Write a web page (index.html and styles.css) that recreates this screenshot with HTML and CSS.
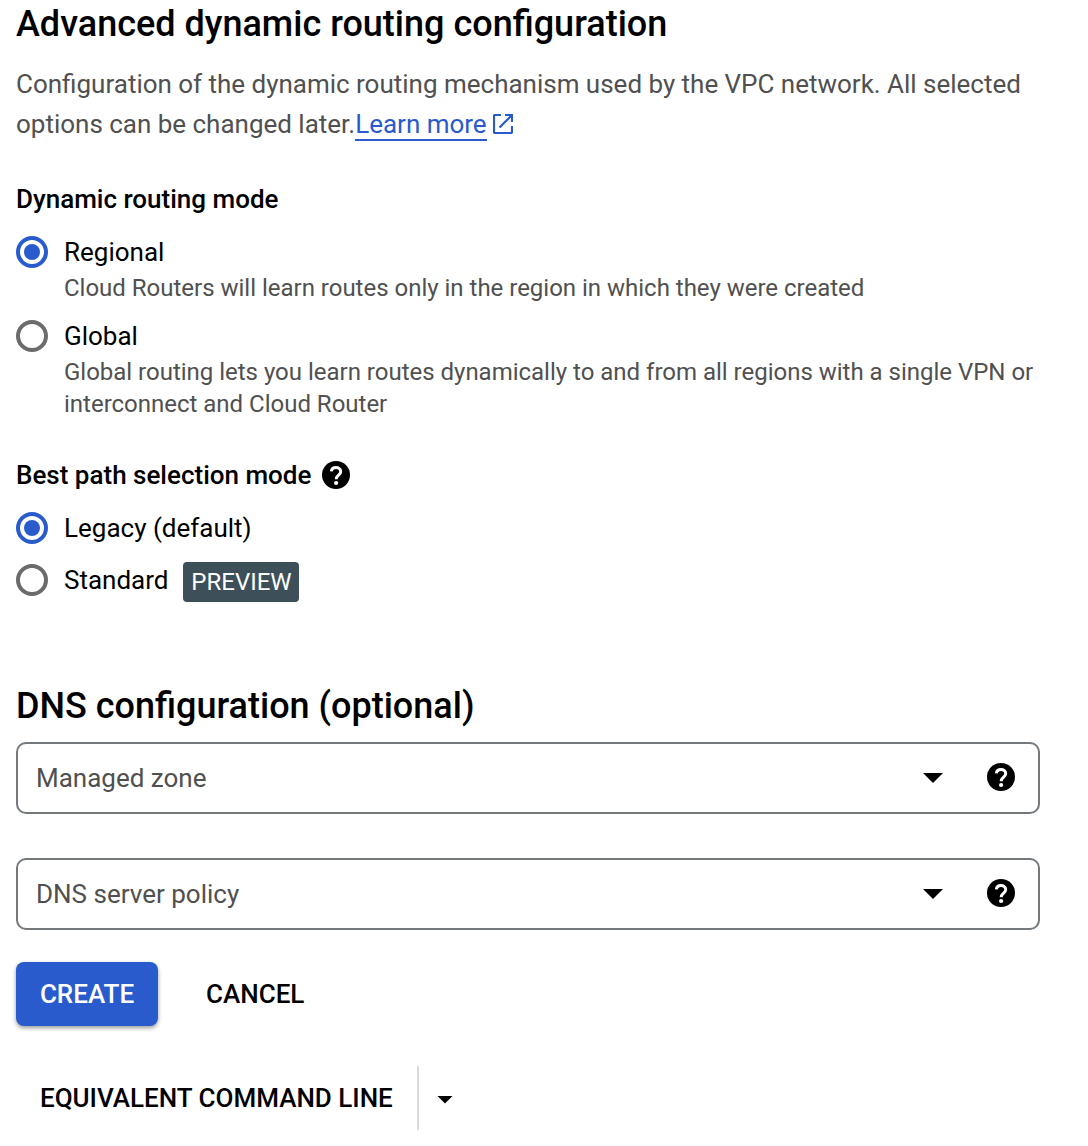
FILE: index.html
```html
<!DOCTYPE html>
<html lang="en">
<head>
<meta charset="utf-8">
<title>Advanced dynamic routing configuration</title>
<link rel="stylesheet" href="styles.css">
</head>
<body>
<svg class="defs" aria-hidden="true">
  <symbol id="help" viewBox="0 0 28 28"><circle cx="14" cy="14" r="14"/><path d="M9.300 10.400C9.600 7.800 11.500 6.500 14 6.500s4.700 1.600 4.700 4.200c0 3.200-4.500 3.700-4.500 7.500" fill="none" stroke="#fff" stroke-width="3"/><circle cx="14.100" cy="22" r="2.100" fill="#fff"/></symbol>
</svg>
<main class="page">
  <h1 class="title">Advanced dynamic routing configuration</h1>
  <p class="description">Configuration of the dynamic routing mechanism used by the VPC network. All selected<br>options can be changed later.<a class="link" href="#">Learn more</a><svg class="external" viewBox="0 0 20 20"><path d="M8 1H2Q1 1 1 2V18Q1 19 2 19H18Q19 19 19 18V12M12 1H19V8M19 1 6.500 13.500"/></svg></p>

  <h2 class="subtitle">Dynamic routing mode</h2>
  <div class="option option-regional">
    <span class="radio radio-on"></span>
    <div><div class="label">Regional</div><div class="hint">Cloud Routers will learn routes only in the region in which they were created</div></div>
  </div>
  <div class="option option-global">
    <span class="radio"></span>
    <div><div class="label">Global</div><div class="hint">Global routing lets you learn routes dynamically to and from all regions with a single VPN or<br>interconnect and Cloud Router</div></div>
  </div>

  <h2 class="subtitle subtitle-path">Best path selection mode <svg class="help"><use href="#help"/></svg></h2>
  <div class="option option-legacy"><span class="radio radio-on"></span><div class="label">Legacy (default)</div></div>
  <div class="option option-standard"><span class="radio"></span><div class="label">Standard</div><span class="badge">PREVIEW</span></div>

  <h1 class="title title-dns">DNS configuration (optional)</h1>
  <div class="select"><span class="placeholder">Managed zone</span><span class="caret"></span><svg class="help"><use href="#help"/></svg></div>
  <div class="select select-policy"><span class="placeholder">DNS server policy</span><span class="caret"></span><svg class="help"><use href="#help"/></svg></div>

  <div class="actions"><button class="button create">CREATE</button><button class="button cancel">CANCEL</button></div>
  <div class="command"><button class="button equivalent">EQUIVALENT COMMAND LINE</button><button class="button more" aria-label="More"><span class="caret caret-small"></span></button></div>
</main>
</body>
</html>
```
FILE: styles.css
```css
* { box-sizing: border-box; }
body { margin: 0; background: #fff; color: #000; font-family: Roboto, sans-serif; }
.defs { display: block; width: 0; height: 0; }
.page { width: 1088px; height: 1146px; padding: 0 48px 0 16px; overflow: hidden; }
.title { margin: 0; font-size: 36px; font-weight: 500; line-height: 48px; white-space: nowrap; }
.description { margin: 16px 0 0; color: #505050; font-size: 26px; line-height: 40px; word-spacing: -.08px; white-space: nowrap; }
.link { color: #2a5bcd; text-decoration: none; border-bottom: 2px solid #2a5bcd; }
.external { width: 20px; height: 20px; margin-left: 6px; vertical-align: -1px; fill: none; stroke: #2a5bcd; stroke-width: 2.2; }
.subtitle { display: flex; align-items: center; margin: 39px 0 0; height: 32px; font-size: 26px; font-weight: 500; white-space: nowrap; }
.help { width: 28px; height: 28px; fill: #000; flex: none; }
.subtitle .help { margin-left: 11px; }
.option { display: flex; align-items: flex-start; gap: 16px; height: 32px; }
.option-regional { margin-top: 21px; height: 68px; }
.option-global { margin-top: 16px; height: 100px; }
.radio { display: flex; align-items: center; justify-content: center; width: 32px; height: 32px; flex: none; border: 4px solid #6b6b6b; border-radius: 50%; }
.radio-on { border-color: #2a5bcd; }
.radio-on::after { content: ""; width: 16px; height: 16px; border-radius: 50%; background: #2a5bcd; }
.label { font-size: 26px; line-height: 32px; white-space: nowrap; }
.hint { margin-top: 4px; color: #505050; font-size: 24px; line-height: 32px; letter-spacing: -.01px; white-space: nowrap; }
.subtitle-path { margin-top: 39px; }
.option-legacy { margin-top: 21px; }
.option-standard { margin-top: 20px; }
.badge { margin: -2px 0 0 -1px; width: 116px; height: 40px; border-radius: 4px; background: #3d4f58; color: #fff; font-size: 24px; line-height: 40px; text-align: center; }
.title-dns { margin-top: 86px; }
.select { display: flex; align-items: center; width: 1024px; height: 72px; margin-top: 12px; padding: 0 23px 0 18px; border: 2px solid #74797d; border-radius: 10px; }
.select-policy { margin-top: 44px; }
.select .help { margin-bottom: 2px; }
.placeholder { flex: 1; color: #505050; font-size: 26px; }
.caret { width: 20px; height: 10px; background: #000; clip-path: polygon(0 0, 100% 0, 50% 100%); }
.select .caret { margin-right: 44px; }
.caret-small { width: 16px; height: 8px; margin-top: 3px; }
.button { border: 0; padding: 0; background: none; color: #000; font: 500 26px/64px Roboto, sans-serif; white-space: nowrap; }
.actions { display: flex; height: 64px; margin-top: 32px; }
.create { width: 142px; border-radius: 8px; background: #2a5bcd; color: #fff; box-shadow: 0 2px 4px rgba(0,0,0,.4); }
.cancel { margin-left: 48px; }
.command { display: flex; height: 64px; margin-top: 40px; }
.equivalent { width: 403px; padding-left: 24px; text-align: left; border-right: 2px solid #dadada; }
.more { display: flex; align-items: center; padding-left: 18px; }
```
